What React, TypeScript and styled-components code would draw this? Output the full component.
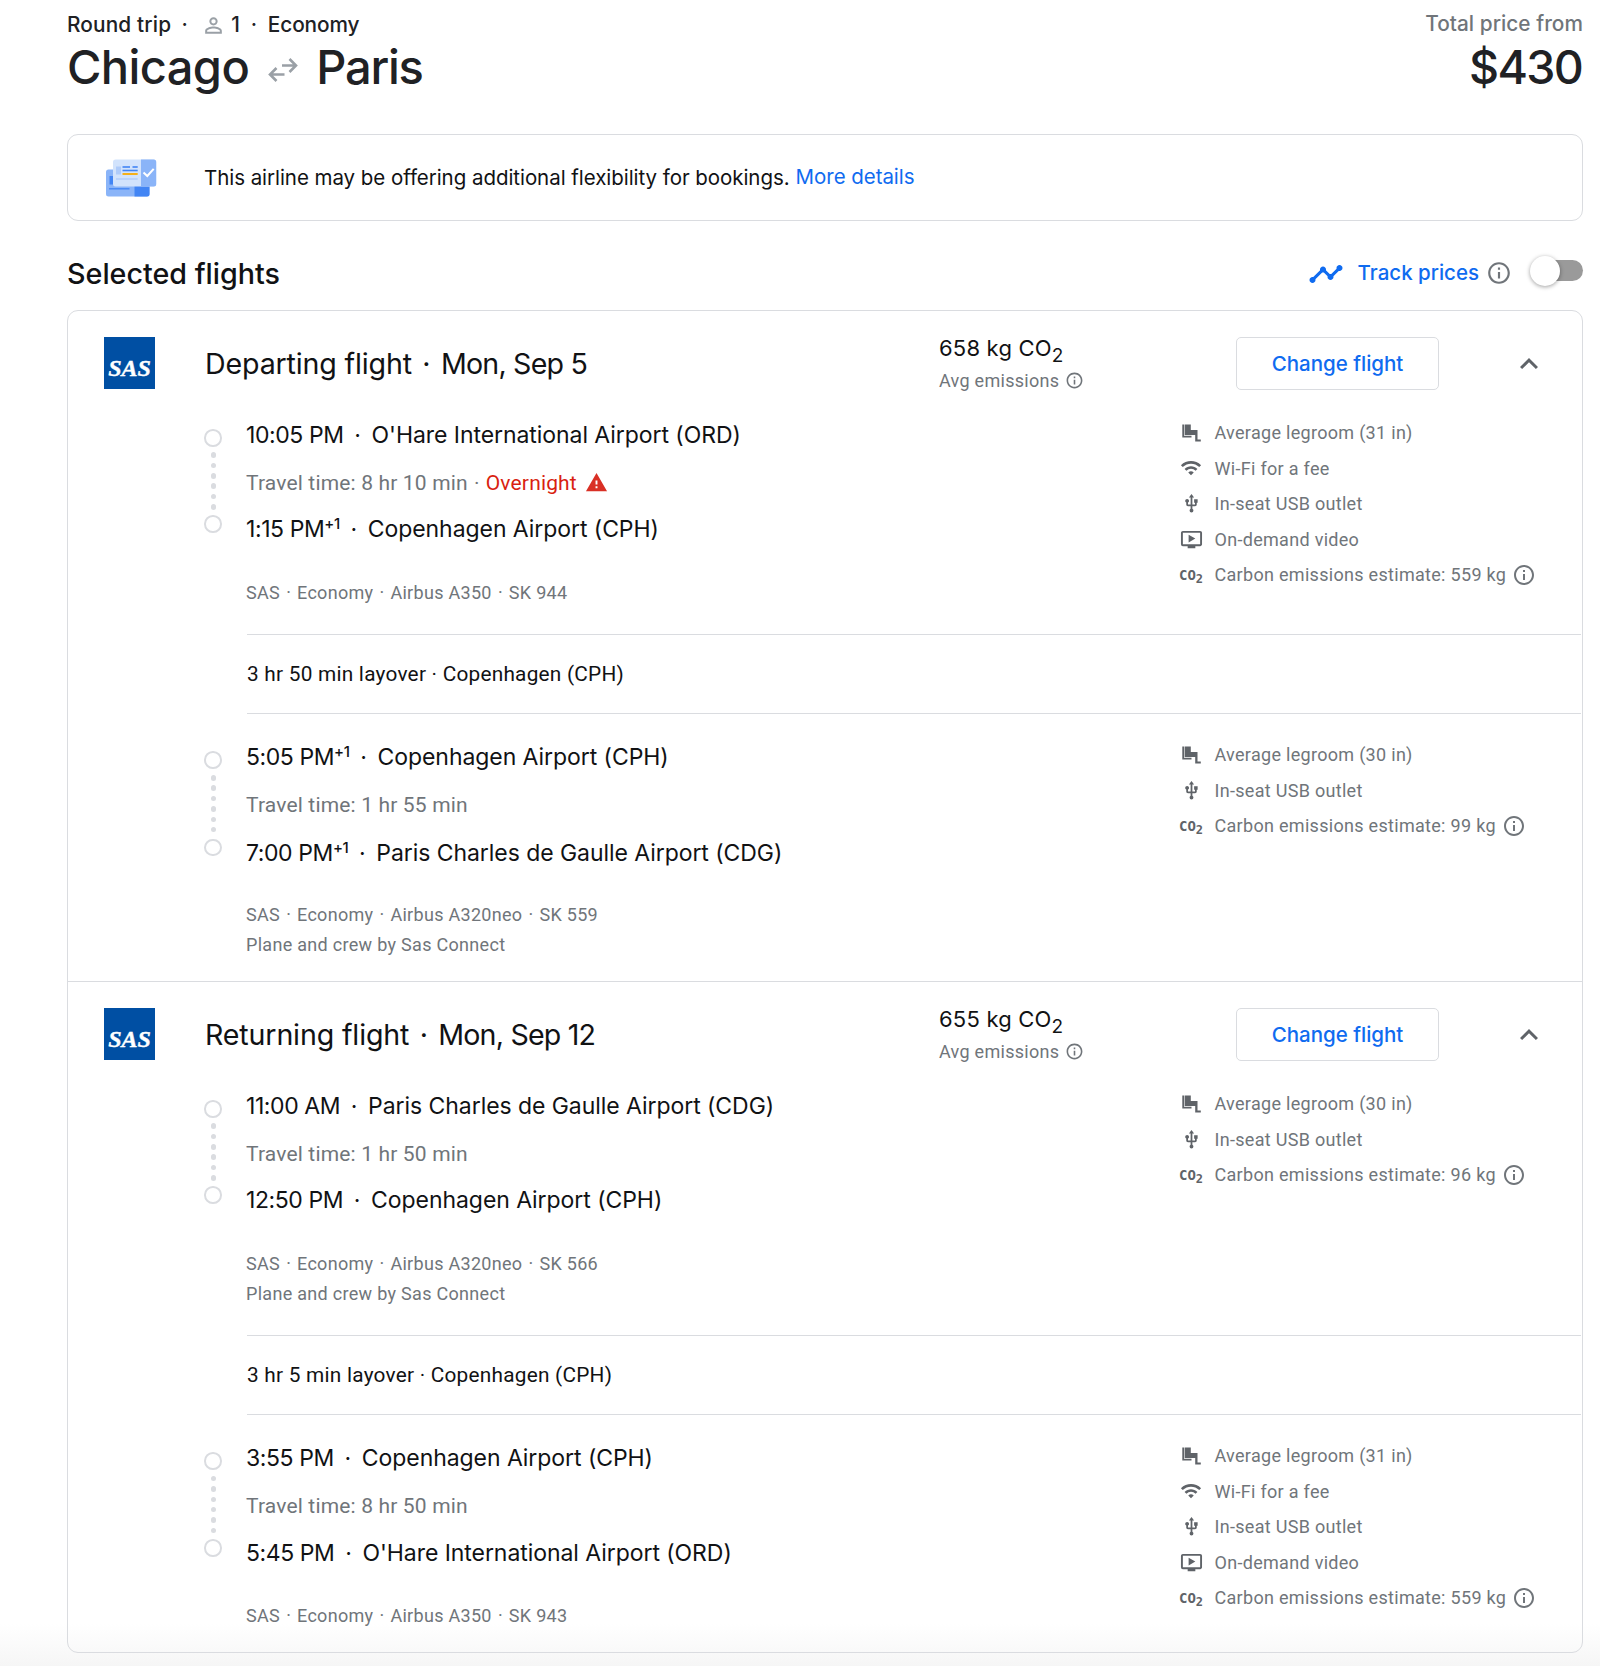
import React from "react";
import styled, { createGlobalStyle } from "styled-components";
import {
  MdInfoOutline,
  MdKeyboardArrowUp,
  MdOndemandVideo,
  MdPersonOutline,
  MdTimeline,
  MdUsb,
  MdWarning,
  MdWifi,
} from "react-icons/md";

const display = `Inter, "Open Sans", sans-serif`;
const body = `Roboto, "Noto Sans", sans-serif`;
const ink = "#202124";
const black = "#111214";
const grey = "#70757a";
const iconGrey = "#5f6368";
const line = "#dadce0";
const blue = "#0f6bf0";

const GlobalStyle = createGlobalStyle`
  *, *::before, *::after { box-sizing: border-box; }
  body { margin: 0; background: #fff; }
  sub, sup { line-height: 0; }
`;

const Page = styled.main`
  width: 1600px;
  height: 1666px;
  padding: 10px 17px 0 67px;
  color: ${ink};
  font-family: ${display};
  background: linear-gradient(#fff, #f6f6f6) bottom / 100% 42px no-repeat #fff;
  overflow: hidden;
`;

const TripHeader = styled.header`
  display: flex;
  justify-content: space-between;
`;

const TripMeta = styled.div`
  display: flex;
  align-items: center;
  height: 28px;
  font-size: 20.8px;
  font-weight: 500;
`;

const TripType = styled.span`
  letter-spacing: 0.15px;
`;

const Cabin = styled.span`
  letter-spacing: -0.1px;
`;

const Separator = styled.span<{ $width: number }>`
  display: inline-block;
  width: ${(p) => p.$width}px;
  text-align: center;
  letter-spacing: 0;
`;

const PersonIcon = styled(MdPersonOutline)`
  width: 25px;
  height: 25px;
  margin: 2px 5px 0 3px;
  color: #9aa0a6;
`;

const Cities = styled.h1`
  display: flex;
  align-items: center;
  margin: 1px 0 0;
  font-size: 47px;
  line-height: 56px;
  font-weight: 500;
`;

const City = styled.span<{ $tracking: number }>`
  letter-spacing: ${(p) => p.$tracking}px;
`;

const SwapIcon = styled.svg`
  width: 30px;
  height: 25px;
  margin: 4px 18px 0 19px;
`;

const PriceBlock = styled.div`
  text-align: right;
`;

const PriceLabel = styled.div`
  color: ${grey};
  font-size: 20.8px;
  line-height: 28px;
  font-weight: 500;
  letter-spacing: 0.05px;
`;

const Price = styled.div`
  margin-top: 1px;
  padding-right: 1px;
  font-size: 46.5px;
  line-height: 56px;
  font-weight: 500;
  letter-spacing: -1.7px;
`;

const Notice = styled.section`
  display: flex;
  align-items: center;
  height: 87px;
  margin-top: 39px;
  padding-left: 37px;
  border: 1px solid ${line};
  border-radius: 11px;
  color: ${black};
  font-size: 20.5px;
  letter-spacing: -0.05px;
`;

const TicketIcon = styled.svg`
  width: 52px;
  height: 38px;
  margin-right: 47px;
`;

const NoticeLink = styled.a`
  margin: 0 0 2px 6px;
  color: ${blue};
`;

const SelectedBar = styled.div`
  display: flex;
  align-items: center;
  justify-content: space-between;
  height: 89px;
  padding-top: 15px;
`;

const SelectedTitle = styled.h2`
  margin: 0;
  color: ${black};
  font-size: 28.7px;
  font-weight: 500;
`;

const TrackPrices = styled.div`
  display: flex;
  align-items: center;
  color: ${blue};
  font-size: 20.5px;
  line-height: 26px;
  font-weight: 500;
`;

const TrendIcon = styled(MdTimeline)`
  width: 36px;
  height: 36px;
  margin: 2px 14px 0 0;
`;

const InfoIcon = styled(MdInfoOutline)<{ $size: number; $gap: number }>`
  width: ${(p) => p.$size}px;
  height: ${(p) => p.$size}px;
  margin-left: ${(p) => p.$gap}px;
  color: ${grey};
  flex: none;
`;

const Toggle = styled.span`
  display: flex;
  align-items: center;
  width: 50px;
  height: 21px;
  margin: 0 0 5px 21px;
  border-radius: 11px;
  background: #9a9a9a;
`;

const Knob = styled.span`
  flex: none;
  width: 30px;
  height: 30px;
  margin-left: -3px;
  border-radius: 50%;
  background: #fff;
  box-shadow: 0 1px 4px rgba(0, 0, 0, 0.38);
`;

const Card = styled.section`
  border: 1px solid ${line};
  border-radius: 11px;
`;

const Leg = styled.article`
  height: 670px;
  & + & {
    border-top: 1px solid ${line};
    height: 671px;
  }
`;

const LegHeader = styled.header`
  display: grid;
  grid-template-columns: 51px 784px 297px 203px 1fr;
  align-items: center;
  height: 104px;
  padding-left: 36px;
  color: ${black};
`;

const AirlineLogo = styled.div`
  display: flex;
  align-items: center;
  justify-content: center;
  width: 51px;
  height: 52px;
  padding-top: 10px;
  background: #004fa3;
  color: #fff;
  font: italic 700 24px/24px "Liberation Serif", serif;
  -webkit-text-stroke: 0.4px #fff;
`;

const LegTitle = styled.h3`
  margin: 0;
  padding-left: 50px;
  font-size: 28.6px;
  font-weight: 400;
  letter-spacing: -0.15px;
`;

const LegDate = styled.span`
  letter-spacing: -0.8px;
`;

const Emissions = styled.div`
  padding-top: 1px;
  font-size: 22px;
  line-height: 34px;
  letter-spacing: 0.2px;
  sub {
    font-size: 19px;
    vertical-align: -6px;
  }
`;

const EmissionsNote = styled.div`
  display: flex;
  align-items: center;
  color: ${grey};
  font-family: ${body};
  font-size: 18px;
  line-height: 32px;
  letter-spacing: 0.28px;
`;

const ChangeButton = styled.button`
  height: 53px;
  margin-top: 1px;
  padding: 0;
  border: 1px solid ${line};
  border-radius: 5px;
  background: #fff;
  color: ${blue};
  font-family: ${display};
  font-size: 20.5px;
  font-weight: 500;
`;

const Collapse = styled(MdKeyboardArrowUp)`
  width: 36px;
  height: 36px;
  margin: 2px 0 0 72px;
  color: ${iconGrey};
`;

const SegmentRow = styled.div`
  display: grid;
  grid-template-columns: 42px 932px 1fr;
  padding-left: 136px;
`;

const Timeline = styled.div<{ $stretch: number }>`
  display: flex;
  flex-direction: column;
  align-items: center;
  justify-content: space-between;
  width: 18px;
  height: ${(p) => 104 + p.$stretch}px;
  margin-top: 14px;
`;

const Stop = styled.span`
  width: 17.5px;
  height: 17.5px;
  border: 2.4px solid ${line};
  border-radius: 50%;
`;

const DotTrack = styled.span`
  display: flex;
  flex-direction: column;
  gap: 4.9px;
  padding-left: 1px;
`;

const TrackDot = styled.i`
  width: 5.5px;
  height: 5.5px;
  border-radius: 50%;
  background: ${line};
`;

const Itinerary = styled.div`
  padding-top: 3px;
  white-space: nowrap;
`;

const StopLine = styled.div`
  height: 35px;
  color: ${black};
  font-size: 23px;
  line-height: 35px;
  letter-spacing: -0.06px;
  sup {
    font-size: 15px;
    font-weight: 500;
    vertical-align: 8px;
  }
`;

const Time = styled.span`
  letter-spacing: -0.42px;
`;

const TravelLine = styled.div<{ $stretch: number }>`
  display: flex;
  align-items: center;
  height: 59px;
  margin-bottom: ${(p) => p.$stretch}px;
  color: ${grey};
  font-family: ${body};
  font-size: 21px;
  letter-spacing: 0.16px;
`;

const Overnight = styled.span`
  display: flex;
  align-items: center;
  gap: 8px;
  color: #d91f11;
`;

const AlertIcon = styled(MdWarning)`
  width: 23px;
  height: 23px;
  color: #d93025;
`;

const Details = styled.div<{ $stretch: number }>`
  margin-top: ${(p) => 30.5 - p.$stretch}px;
  color: ${grey};
  font-family: ${body};
  font-size: 18px;
  line-height: 30px;
  letter-spacing: 0.3px;
`;

const Amenities = styled.ul`
  margin: 0;
  padding: 0;
  list-style: none;
  color: ${grey};
  font-family: ${body};
  font-size: 18px;
  letter-spacing: 0.3px;
`;

const Amenity = styled.li`
  display: flex;
  align-items: center;
  height: 35.55px;
`;

const AmenityIcon = styled.span`
  display: flex;
  align-items: center;
  justify-content: center;
  width: 26px;
  margin-right: 10.5px;
  color: ${iconGrey};
`;

const Co2Mark = styled.span`
  color: ${iconGrey};
  font: 700 14px/16px "DejaVu Sans Mono", monospace;
  letter-spacing: 0;
  sub {
    font-size: 12px;
    vertical-align: -3px;
  }
`;

const Layover = styled.div`
  display: flex;
  align-items: center;
  height: 80px;
  margin: 26.5px 1px 23px 179px;
  padding-bottom: 1px;
  border: solid ${line};
  border-width: 1px 0;
  color: ${black};
  font-family: ${body};
  font-size: 20.8px;
  letter-spacing: 0.24px;
`;

type AmenityKind = "legroom" | "wifi" | "usb" | "video" | "co2";
type StopInfo = { time: string; nextDay?: boolean; airport: string };
type Segment = {
  from: StopInfo;
  to: StopInfo;
  travel: string;
  overnight?: boolean;
  flight: string[];
  operator?: string;
  stretch: number;
  amenities: [AmenityKind, string][];
};
type LegInfo = {
  title: string;
  date: string;
  co2: string;
  first: Segment;
  layover: string;
  second: Segment;
};

const ORD = "O'Hare International Airport (ORD)";
const CPH = "Copenhagen Airport (CPH)";
const CDG = "Paris Charles de Gaulle Airport (CDG)";

const legs: LegInfo[] = [
  {
    title: "Departing flight",
    date: "Mon, Sep 5",
    co2: "658 kg CO",
    first: {
      from: { time: "10:05 PM", airport: ORD },
      to: { time: "1:15 PM", nextDay: true, airport: CPH },
      travel: "8 hr 10 min",
      overnight: true,
      flight: ["SAS", "Economy", "Airbus A350", "SK 944"],
      stretch: 0,
      amenities: [
        ["legroom", "Average legroom (31 in)"],
        ["wifi", "Wi-Fi for a fee"],
        ["usb", "In-seat USB outlet"],
        ["video", "On-demand video"],
        ["co2", "Carbon emissions estimate: 559 kg"],
      ],
    },
    layover: "3 hr 50 min layover · Copenhagen (CPH)",
    second: {
      from: { time: "5:05 PM", nextDay: true, airport: CPH },
      to: { time: "7:00 PM", nextDay: true, airport: CDG },
      travel: "1 hr 55 min",
      flight: ["SAS", "Economy", "Airbus A320neo", "SK 559"],
      operator: "Plane and crew by Sas Connect",
      stretch: 1.5,
      amenities: [
        ["legroom", "Average legroom (30 in)"],
        ["usb", "In-seat USB outlet"],
        ["co2", "Carbon emissions estimate: 99 kg"],
      ],
    },
  },
  {
    title: "Returning flight",
    date: "Mon, Sep 12",
    co2: "655 kg CO",
    first: {
      from: { time: "11:00 AM", airport: CDG },
      to: { time: "12:50 PM", airport: CPH },
      travel: "1 hr 50 min",
      flight: ["SAS", "Economy", "Airbus A320neo", "SK 566"],
      operator: "Plane and crew by Sas Connect",
      stretch: 0,
      amenities: [
        ["legroom", "Average legroom (30 in)"],
        ["usb", "In-seat USB outlet"],
        ["co2", "Carbon emissions estimate: 96 kg"],
      ],
    },
    layover: "3 hr 5 min layover · Copenhagen (CPH)",
    second: {
      from: { time: "3:55 PM", airport: CPH },
      to: { time: "5:45 PM", airport: ORD },
      travel: "8 hr 50 min",
      flight: ["SAS", "Economy", "Airbus A350", "SK 943"],
      stretch: 1,
      amenities: [
        ["legroom", "Average legroom (31 in)"],
        ["wifi", "Wi-Fi for a fee"],
        ["usb", "In-seat USB outlet"],
        ["video", "On-demand video"],
        ["co2", "Carbon emissions estimate: 559 kg"],
      ],
    },
  },
];

function LegroomIcon() {
  return (
    <svg width="19" height="18" viewBox="0 0 19 18" fill="currentColor">
      <path d="M0.3 0.5h1.7v11.300h7.500v1.700H0.300z" />
      <path d="M2.600 0.500h6.200v5.600h6.700v9.500h3.300v1.900h-5.600v-6.400H2.600z" />
    </svg>
  );
}

function Tickets() {
  return (
    <TicketIcon viewBox="0 0 52 38">
      <rect x="1" y="10.5" width="43.5" height="27" rx="2.5" fill="#8ab4f8" />
      <path d="M29.5 27h15v8a2.5 2.5 0 0 1-2.5 2.5h-12.5z" fill="#4285f4" />
      <path d="M4.5 17h3.5v8.5h-3.5z" fill="#4285f4" />
      <path d="M4 29.8h20.5" stroke="#4285f4" strokeWidth="1.3" />
      <rect x="8" y="0.5" width="43.2" height="27" rx="2.5" fill="#d2e3fc" />
      <path d="M36 0.5h12.7a2.5 2.5 0 0 1 2.5 2.5v22a2.5 2.5 0 0 1-2.5 2.5H36z" fill="#8ab4f8" />
      <path d="M11 7.5h5v8h-5z" fill="#aecbfa" />
      <path d="M17.5 8h7.5M27.5 8h5.2" stroke="#5e97f6" strokeWidth="1.8" />
      <path d="M17.5 11.5h15.2" stroke="#4285f4" strokeWidth="1.6" />
      <path d="M17.5 15h15.2" stroke="#f9ab00" strokeWidth="1.8" />
      <path d="M11 20h21.7" stroke="#aecbfa" strokeWidth="1.3" />
      <path d="M38.5 13.5l3.8 3.5 6.4-7.2" stroke="#fff" strokeWidth="2" fill="none" />
    </TicketIcon>
  );
}

function AmenityGlyph({ kind }: { kind: AmenityKind }) {
  switch (kind) {
    case "legroom":
      return <LegroomIcon />;
    case "wifi":
      return <MdWifi size={22} />;
    case "usb":
      return <MdUsb size={21} />;
    case "video":
      return <MdOndemandVideo size={23} />;
    default:
      return (
        <Co2Mark>
          CO<sub>2</sub>
        </Co2Mark>
      );
  }
}

function StopRow({ stop }: { stop: StopInfo }) {
  return (
    <StopLine>
      <Time>
        {stop.time}
        {stop.nextDay && <sup>+1</sup>}
      </Time>
      <Separator $width={28}>·</Separator>
      {stop.airport}
    </StopLine>
  );
}

function SegmentView({ segment }: { segment: Segment }) {
  const { stretch } = segment;
  return (
    <SegmentRow>
      <Timeline $stretch={stretch}>
        <Stop />
        <DotTrack>
          {[0, 1, 2, 3, 4, 5].map((n) => (
            <TrackDot key={n} />
          ))}
        </DotTrack>
        <Stop />
      </Timeline>
      <Itinerary>
        <StopRow stop={segment.from} />
        <TravelLine $stretch={stretch}>
          Travel time: {segment.travel}
          {segment.overnight && (
            <>
              <Separator $width={18}>·</Separator>
              <Overnight>
                Overnight <AlertIcon />
              </Overnight>
            </>
          )}
        </TravelLine>
        <StopRow stop={segment.to} />
        <Details $stretch={stretch}>
          {segment.flight.map((part, i) => (
            <React.Fragment key={part}>
              {i > 0 && <Separator $width={17}>·</Separator>}
              {part}
            </React.Fragment>
          ))}
          {segment.operator && <div>{segment.operator}</div>}
        </Details>
      </Itinerary>
      <Amenities>
        {segment.amenities.map(([kind, label]) => (
          <Amenity key={kind}>
            <AmenityIcon>
              <AmenityGlyph kind={kind} />
            </AmenityIcon>
            {label}
            {kind === "co2" && <InfoIcon $size={24} $gap={6} />}
          </Amenity>
        ))}
      </Amenities>
    </SegmentRow>
  );
}

export default function App() {
  return (
    <>
      <GlobalStyle />
      <Page>
        <TripHeader>
          <div>
            <TripMeta>
              <TripType>Round trip</TripType>
              <Separator $width={27}>·</Separator>
              <PersonIcon />1
              <Separator $width={28}>·</Separator>
              <Cabin>Economy</Cabin>
            </TripMeta>
            <Cities>
              <City $tracking={-0.6}>Chicago</City>
              <SwapIcon viewBox="0 0 30 25" fill="none" stroke="#9aa0a6" strokeWidth="2.6">
                <path d="M14 8.5h14M21.5 2l6.5 6.5-6.5 6.5M16.5 17.5H2M8.5 11L2 17.5 8.5 24" />
              </SwapIcon>
              <City $tracking={-1.2}>Paris</City>
            </Cities>
          </div>
          <PriceBlock>
            <PriceLabel>Total price from</PriceLabel>
            <Price>$430</Price>
          </PriceBlock>
        </TripHeader>

        <Notice>
          <Tickets />
          This airline may be offering additional flexibility for bookings.
          <NoticeLink>More details</NoticeLink>
        </Notice>

        <SelectedBar>
          <SelectedTitle>Selected flights</SelectedTitle>
          <TrackPrices>
            <TrendIcon />
            Track prices
            <InfoIcon $size={26} $gap={7} />
            <Toggle>
              <Knob />
            </Toggle>
          </TrackPrices>
        </SelectedBar>

        <Card>
          {legs.map((leg) => (
            <Leg key={leg.title}>
              <LegHeader>
                <AirlineLogo>SAS</AirlineLogo>
                <LegTitle>
                  {leg.title}
                  <Separator $width={29}>·</Separator>
                  <LegDate>{leg.date}</LegDate>
                </LegTitle>
                <div>
                  <Emissions>
                    {leg.co2}
                    <sub>2</sub>
                  </Emissions>
                  <EmissionsNote>
                    Avg emissions
                    <InfoIcon $size={19} $gap={6} />
                  </EmissionsNote>
                </div>
                <ChangeButton>Change flight</ChangeButton>
                <Collapse />
              </LegHeader>
              <SegmentView segment={leg.first} />
              <Layover>{leg.layover}</Layover>
              <SegmentView segment={leg.second} />
            </Leg>
          ))}
        </Card>
      </Page>
    </>
  );
}
